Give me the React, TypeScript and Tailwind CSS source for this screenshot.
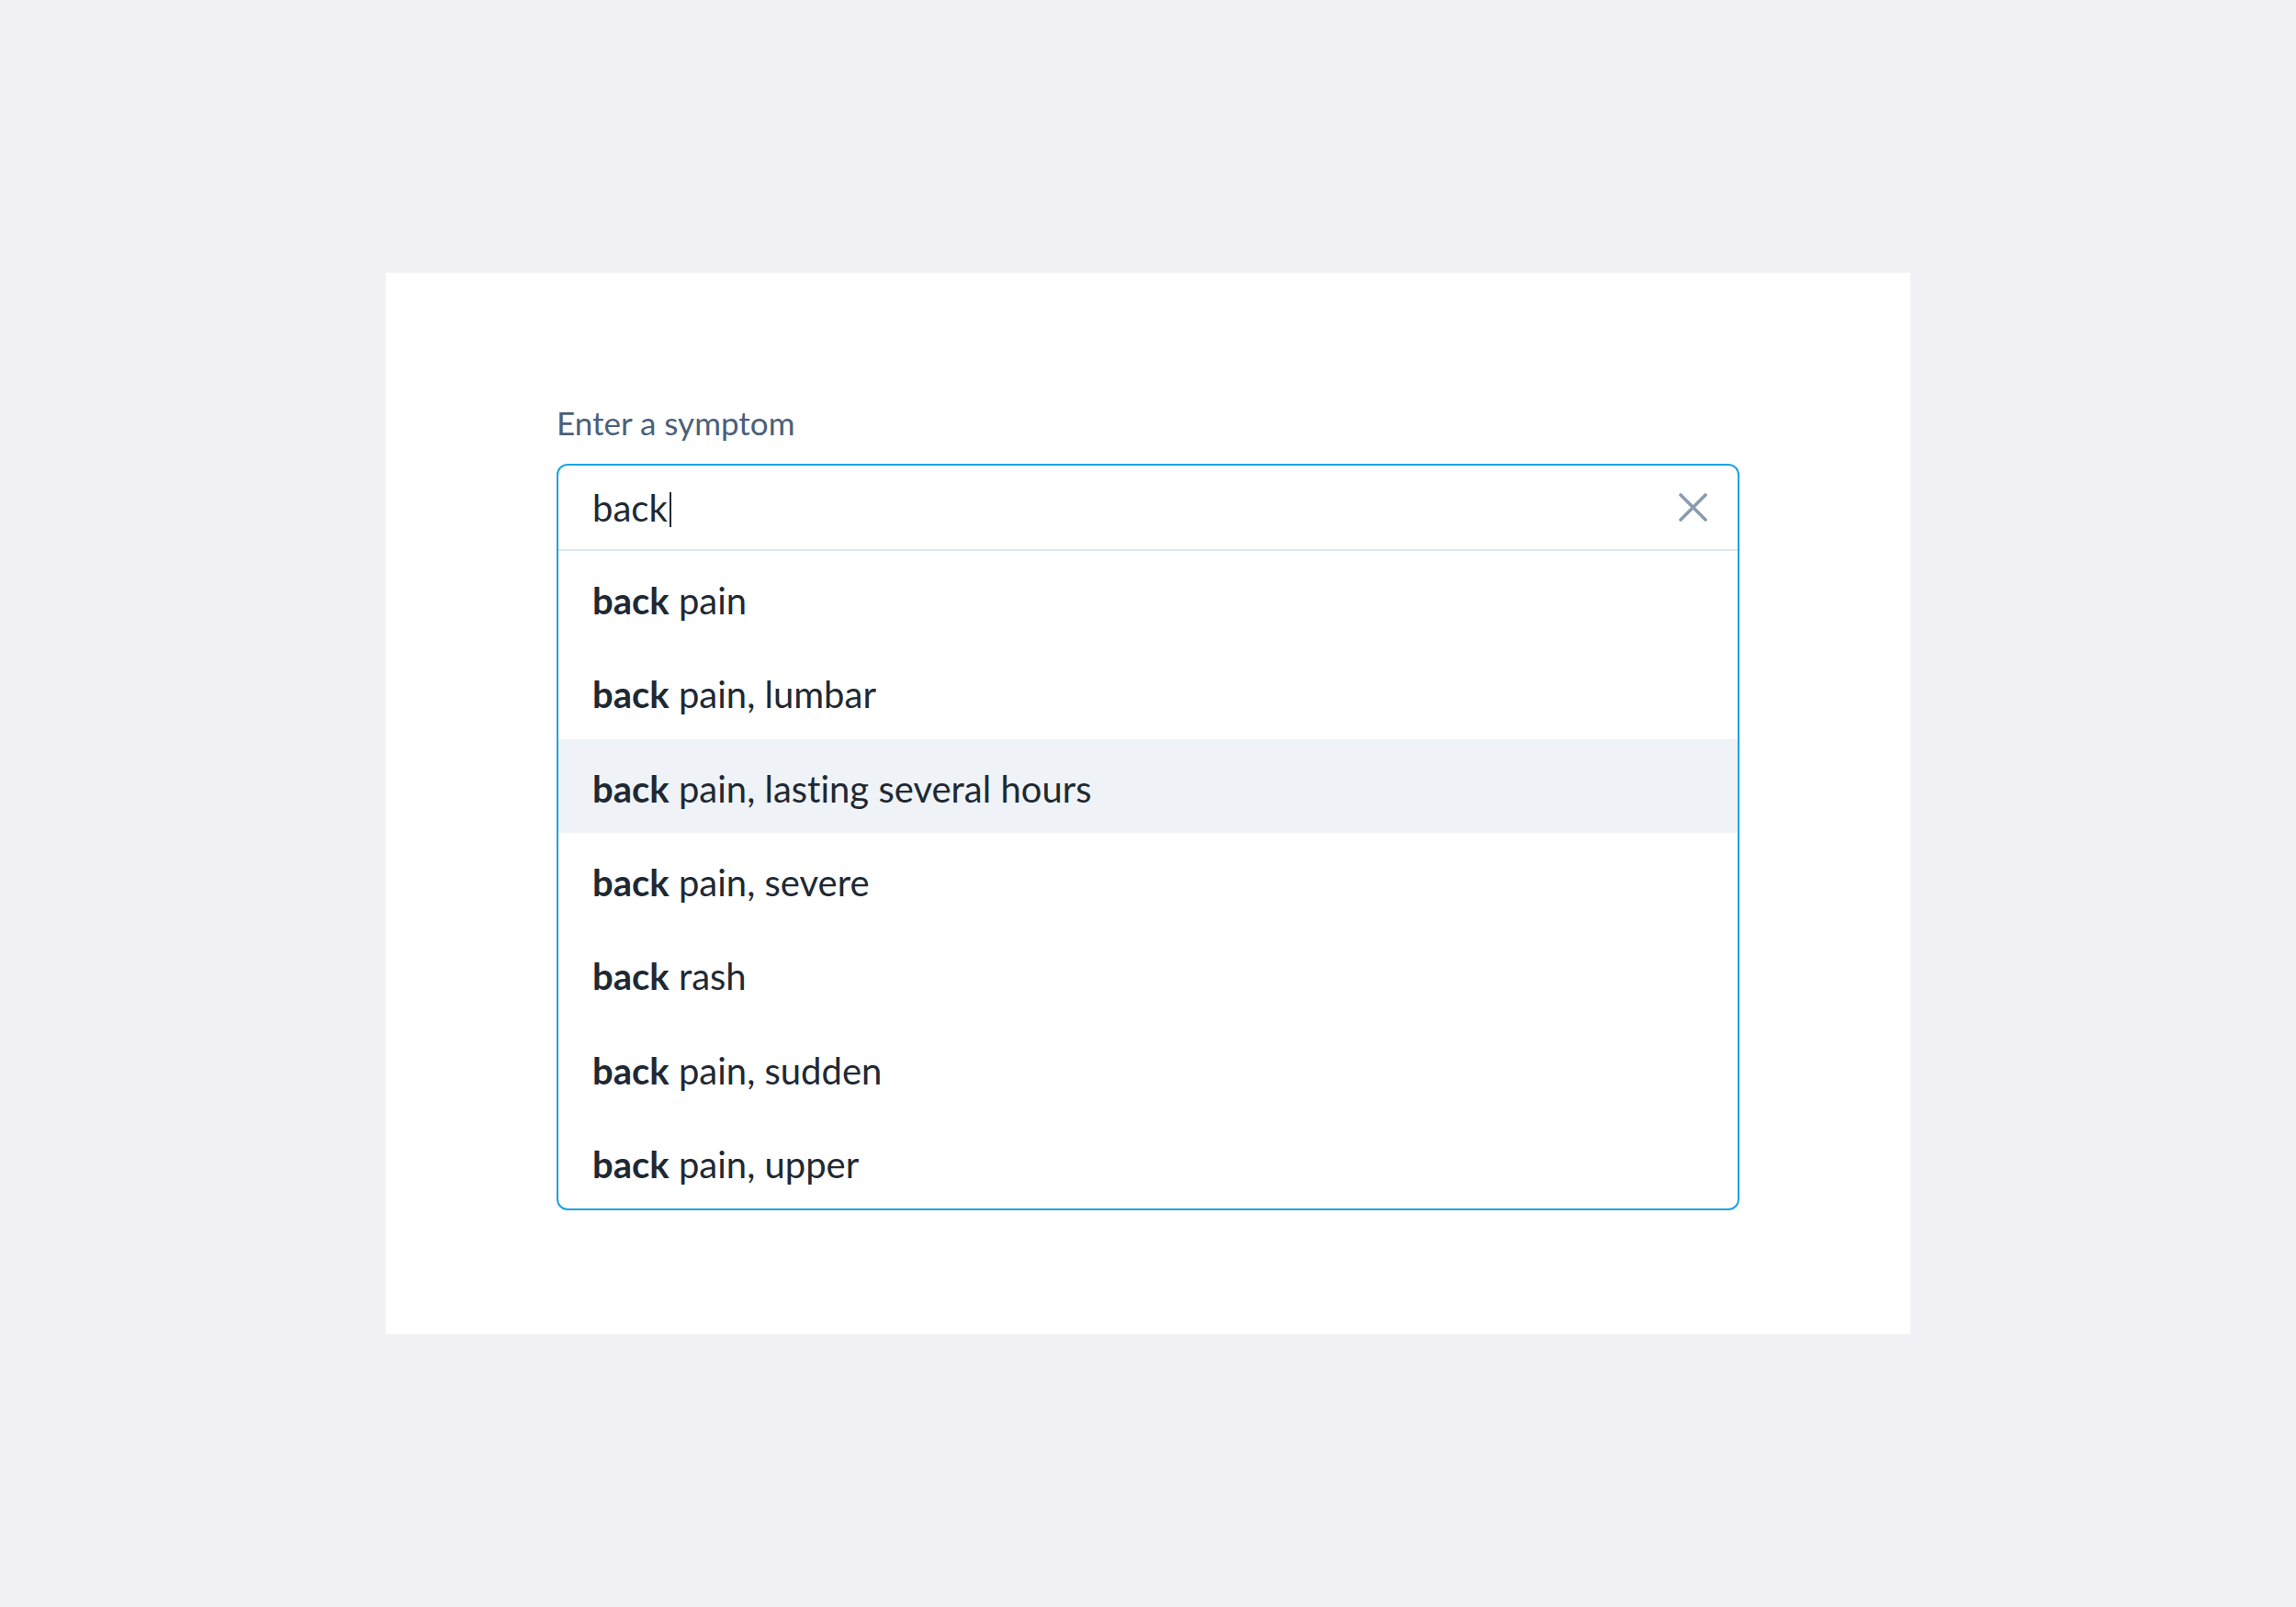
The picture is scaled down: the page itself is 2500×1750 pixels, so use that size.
const suggestions = [
  "pain",
  "pain, lumbar",
  "pain, lasting several hours",
  "pain, severe",
  "rash",
  "pain, sudden",
  "pain, upper",
];

export default function App() {
  const highlighted = 2;

  return (
    <div className="min-h-screen w-full bg-[#f1f1f5] flex items-center justify-center font-['Lato',sans-serif] [font-variant-ligatures:none]">
      <div className="w-[1660px] h-[1156px] bg-white px-[186px] pt-[141px]">
        <label className="block text-[35px] leading-[44px] text-[#4b6079]">Enter a symptom</label>
        <div className="mt-[23px] border-2 border-[#1ca3df] rounded-[12px] overflow-hidden">
          {/* Input row */}
          <div className="h-[93px] flex items-center justify-between pl-[37px] pr-[33px] border-b-2 border-[#dfe5ea]">
            <div className="flex items-center text-[40px] text-[#1f2933]">
              <span>back</span>
              <span className="ml-[2px] mt-[4px] w-[2px] h-[38px] bg-[#1f2933]" />
            </div>
            <svg width="31" height="31" viewBox="0 0 31 31" className="text-[#8a9bb0]">
              <path d="M2 2L29 29M29 2L2 29" stroke="currentColor" strokeWidth="3.6" strokeLinecap="round" fill="none" />
            </svg>
          </div>

          {/* Suggestions */}
          <ul>
            {suggestions.map((s, i) => (
              <li
                key={s}
                className={`h-[102.3px] flex items-center pl-[37px] pt-[6px] text-[40px] text-[#1f2933] ${i === highlighted ? "bg-[#eff3f7]" : ""}`}
              >
                <span>
                  <span className="font-bold">back</span> {s}
                </span>
              </li>
            ))}
          </ul>
        </div>
      </div>
    </div>
  );
}
